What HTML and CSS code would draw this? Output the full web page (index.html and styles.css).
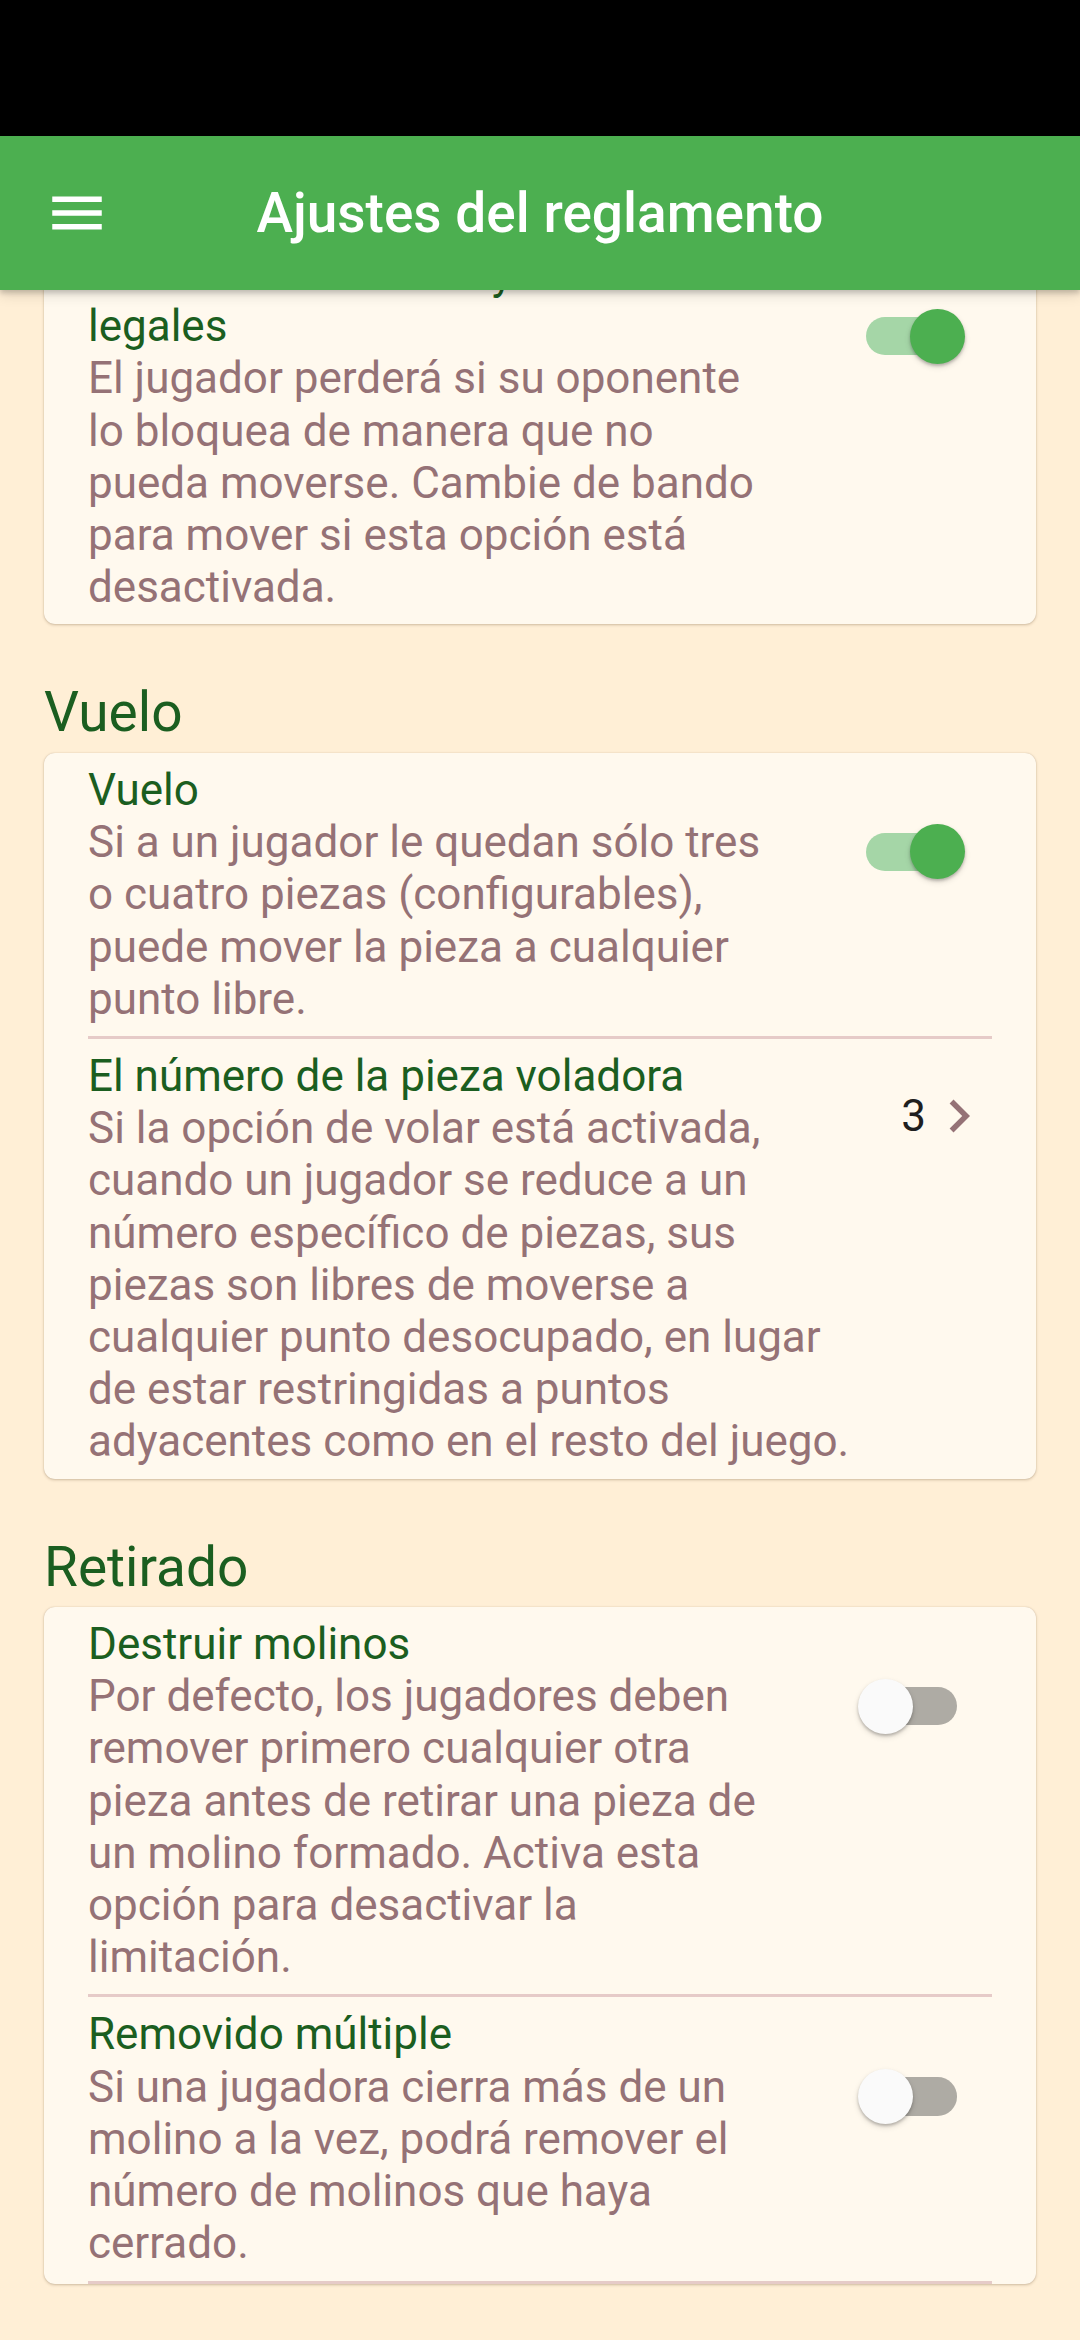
FILE: index.html
```html
<!DOCTYPE html>
<html lang="es">
<head>
<meta charset="utf-8">
<title>Ajustes del reglamento</title>
<link rel="stylesheet" href="styles.css">
</head>
<body>
<div class="screen">
  <div class="status-bar"></div>
  <header class="app-bar">
    <div class="menu-btn">
      <svg class="menu-icon" viewBox="0 0 24 24" width="66" height="66"><path d="M3 18h18v-2H3v2zm0-5h18v-2H3v2zm0-7v2h18V6H3z" fill="#ffffff"/></svg>
    </div>
    <h1 class="app-title">Ajustes del reglamento</h1>
    <div></div>
  </header>

  <main class="content">
    <section class="card">
      <div class="tile">
        <div class="tile-text">
          <div class="tile-title">Perder cuando no hay movimientos<br>legales</div>
          <div class="tile-desc">El jugador perderá si su oponente<br>lo bloquea de manera que no<br>pueda moverse. Cambie de bando<br>para mover si esta opción está<br>desactivada.</div>
        </div>
        <div class="trailing">
          <div class="switch on"><span class="track"></span><span class="thumb"></span></div>
        </div>
      </div>
    </section>

    <h2 class="section-title">Vuelo</h2>
    <section class="card">
      <div class="tile">
        <div class="tile-text">
          <div class="tile-title">Vuelo</div>
          <div class="tile-desc">Si a un jugador le quedan sólo tres<br>o cuatro piezas (configurables),<br>puede mover la pieza a cualquier<br>punto libre.</div>
        </div>
        <div class="trailing">
          <div class="switch on"><span class="track"></span><span class="thumb"></span></div>
        </div>
      </div>
      <div class="divider"></div>
      <div class="tile">
        <div class="tile-text">
          <div class="tile-title">El número de la pieza voladora</div>
          <div class="tile-desc">Si la opción de volar está activada,<br>cuando un jugador se reduce a un<br>número específico de piezas, sus<br>piezas son libres de moverse a<br>cualquier punto desocupado, en lugar<br>de estar restringidas a puntos<br>adyacentes como en el resto del juego.</div>
        </div>
        <div class="trailing value">
          <span class="value-text">3</span>
          <svg class="chevron" viewBox="0 0 24 24" width="66" height="66"><path d="M10 6L8.59 7.41 13.17 12l-4.58 4.59L10 18l6-6z" fill="#957276"/></svg>
        </div>
      </div>
    </section>

    <h2 class="section-title">Retirado</h2>
    <section class="card">
      <div class="tile">
        <div class="tile-text">
          <div class="tile-title">Destruir molinos</div>
          <div class="tile-desc">Por defecto, los jugadores deben<br>remover primero cualquier otra<br>pieza antes de retirar una pieza de<br>un molino formado. Activa esta<br>opción para desactivar la<br>limitación.</div>
        </div>
        <div class="trailing">
          <div class="switch"><span class="track"></span><span class="thumb"></span></div>
        </div>
      </div>
      <div class="divider"></div>
      <div class="tile">
        <div class="tile-text">
          <div class="tile-title">Removido múltiple</div>
          <div class="tile-desc">Si una jugadora cierra más de un<br>molino a la vez, podrá remover el<br>número de molinos que haya<br>cerrado.</div>
        </div>
        <div class="trailing">
          <div class="switch"><span class="track"></span><span class="thumb"></span></div>
        </div>
      </div>
      <div class="divider"></div>
    </section>
  </main>
</div>
</body>
</html>
```
FILE: styles.css
```css
html, body {
  margin: 0;
  padding: 0;
}

body {
  background: #FFEFD6;
  font-family: Roboto, "Noto Sans", "Liberation Sans", sans-serif;
}

.screen {
  width: 1080px;
  height: 2340px;
  overflow: hidden;
  background: #FFEFD6;
}

.status-bar {
  height: 136px;
  background: #000000;
}

.app-bar {
  height: 154px;
  background: #4CAF50;
  display: grid;
  grid-template-columns: 1fr auto 1fr;
  align-items: center;
  position: relative;
  z-index: 2;
  box-shadow: 0 3px 5px rgba(0, 0, 0, 0.18), 0 6px 12px rgba(0, 0, 0, 0.10);
}

.menu-btn {
  padding-left: 44px;
  display: flex;
  align-items: center;
}

.menu-icon {
  display: block;
}

.app-title {
  margin: 0;
  font-size: 55px;
  font-weight: 500;
  color: #ffffff;
  line-height: 1;
  white-space: nowrap;
}

.content {
  margin-top: -53px;
  padding: 0 44px;
  position: relative;
  z-index: 1;
}

.card {
  background: #FFF9EE;
  border-radius: 11px;
  box-shadow: 0 1px 3px rgba(90, 60, 30, 0.28), 0 0 1px rgba(90, 60, 30, 0.25);
  overflow: hidden;
}

.section-title {
  margin: 56px 0 8px 0;
  font-size: 55px;
  font-weight: 400;
  line-height: 64.5px;
  color: #1B5E20;
}

.tile {
  display: flex;
  align-items: flex-start;
  gap: 44px;
  padding: 11px 44px;
}

.tile-text {
  flex: 1;
  min-width: 0;
}

.tile-title {
  font-size: 44px;
  line-height: 52.2px;
  color: #1B5E20;
  white-space: nowrap;
}

.tile-desc {
  font-size: 44px;
  line-height: 52.2px;
  color: #957276;
  white-space: nowrap;
}

.trailing {
  margin-top: 33px;
  flex: none;
}

.trailing.value {
  display: flex;
  align-items: center;
  height: 66px;
  margin-top: 33px;
}

.value-text {
  font-size: 44px;
  color: #1f1f1f;
  line-height: 66px;
}

.chevron {
  display: block;
}

.switch {
  width: 162px;
  height: 110px;
  position: relative;
  display: flex;
  align-items: center;
  justify-content: center;
}

.track {
  width: 91px;
  height: 38.5px;
  border-radius: 19.25px;
  background: #AEABA4;
}

.thumb {
  position: absolute;
  top: 27.5px;
  left: 27.5px;
  width: 55px;
  height: 55px;
  border-radius: 50%;
  background: #FAFAFA;
  box-shadow: 0 2px 3px rgba(0, 0, 0, 0.22), 0 3px 6px rgba(0, 0, 0, 0.12);
}

.switch.on .track {
  background: #A5D6A7;
}

.switch.on .thumb {
  left: 79.5px;
  background: #4CAF50;
}

.divider {
  height: 3px;
  margin: 0 44px;
  background: #E6CBC8;
}
```
